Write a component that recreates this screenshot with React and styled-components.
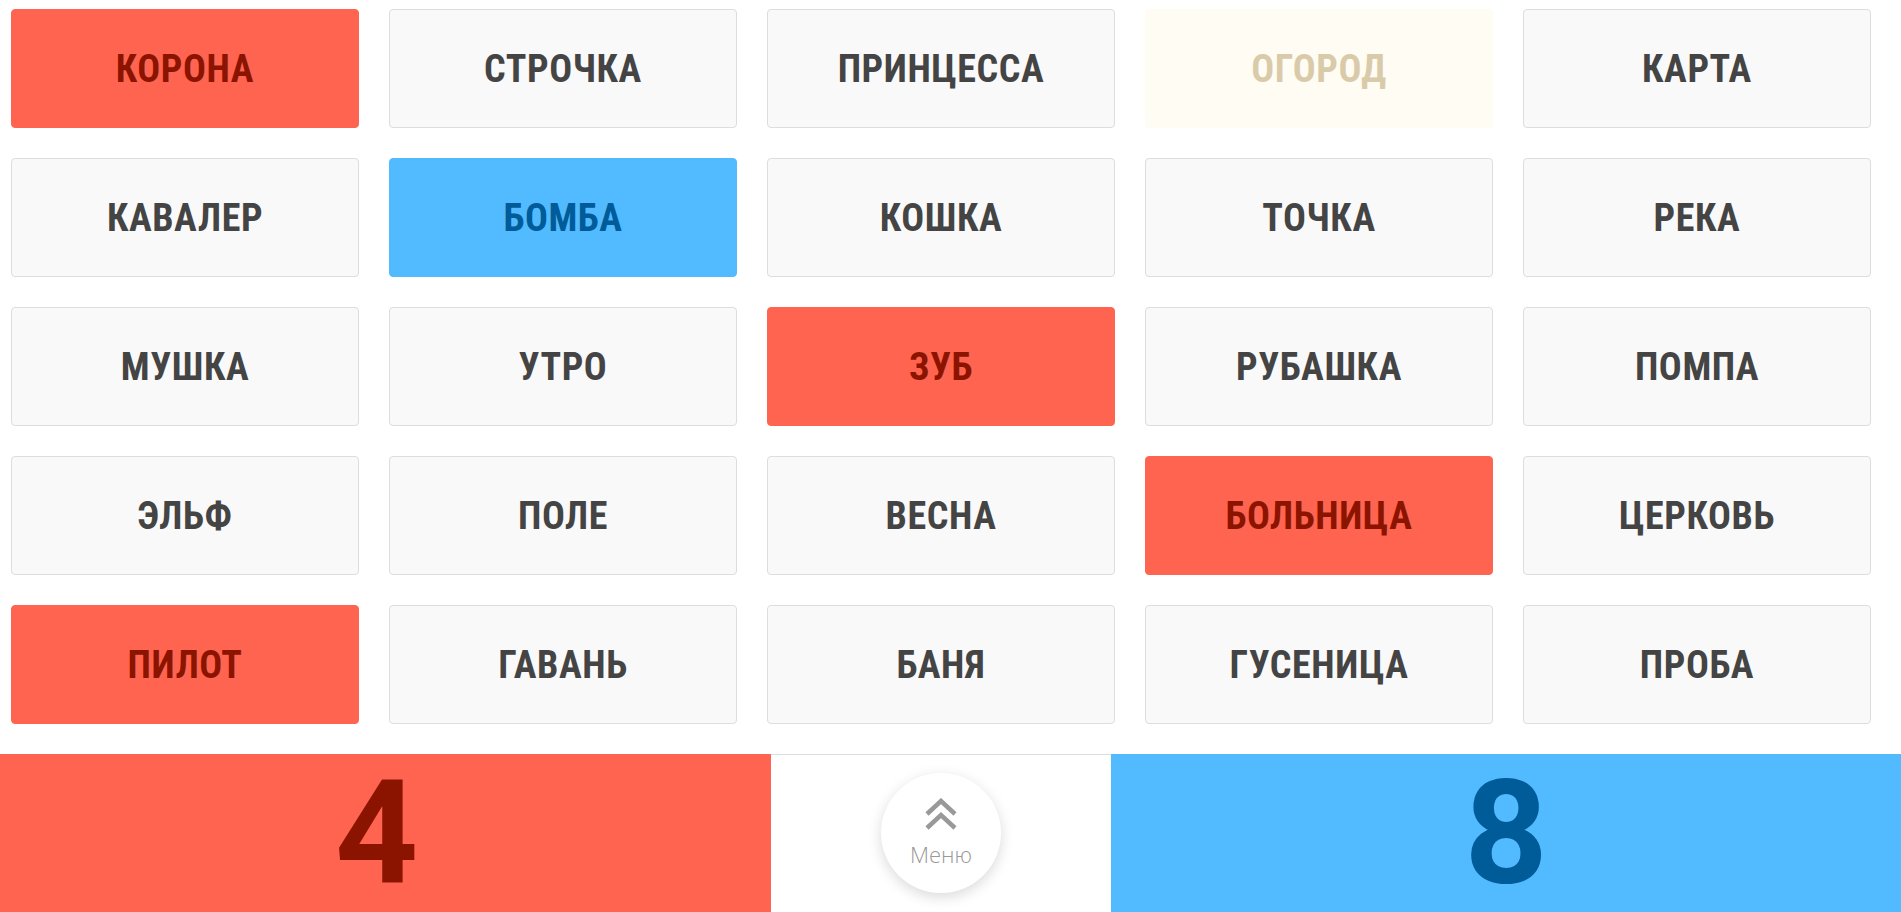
import React from 'react';
import styled, { createGlobalStyle } from 'styled-components';

const GlobalStyle = createGlobalStyle`
  html, body {
    margin: 0;
    padding: 0;
    background: #fff;
    font-family: Roboto, 'Liberation Sans', sans-serif;
  }
`;

const words = [
  ['КОРОНА', 'red'], ['СТРОЧКА', 'neutral'], ['ПРИНЦЕССА', 'neutral'], ['ОГОРОД', 'killer'], ['КАРТА', 'neutral'],
  ['КАВАЛЕР', 'neutral'], ['БОМБА', 'blue'], ['КОШКА', 'neutral'], ['ТОЧКА', 'neutral'], ['РЕКА', 'neutral'],
  ['МУШКА', 'neutral'], ['УТРО', 'neutral'], ['ЗУБ', 'red'], ['РУБАШКА', 'neutral'], ['ПОМПА', 'neutral'],
  ['ЭЛЬФ', 'neutral'], ['ПОЛЕ', 'neutral'], ['ВЕСНА', 'neutral'], ['БОЛЬНИЦА', 'red'], ['ЦЕРКОВЬ', 'neutral'],
  ['ПИЛОТ', 'red'], ['ГАВАНЬ', 'neutral'], ['БАНЯ', 'neutral'], ['ГУСЕНИЦА', 'neutral'], ['ПРОБА', 'neutral'],
];

const palette = {
  red: { bg: '#ff6450', border: '#ff6450', color: '#8b1400' },
  blue: { bg: '#52baff', border: '#52baff', color: '#005b99' },
  killer: { bg: '#fffcf3', border: '#fffcf3', color: '#d9cba9' },
  neutral: { bg: '#f9f9f9', border: '#dddddd', color: '#444444' },
};

const App = () => {
  return (
    <>
      <GlobalStyle />
      <Page>
        <Board>
          {words.map(([word, kind]) => (
            <Card key={word} $kind={kind}>{word}</Card>
          ))}
        </Board>
        <ScoreBar>
          <Score $team='red'><Digit>4</Digit></Score>
          <Middle>
            <MenuButton>
              <svg width='34' height='32' viewBox='0 0 34 32' fill='none' stroke='#999' strokeWidth='4.5'>
                <polyline points='3,16 17,3 31,16' />
                <polyline points='3,30 17,17 31,30' />
              </svg>
              <span>Меню</span>
            </MenuButton>
          </Middle>
          <Score $team='blue'><Digit>8</Digit></Score>
        </ScoreBar>
      </Page>
    </>
  );
};

const Page = styled.div`
  width: 1901px;
  height: 912px;
  display: flex;
  flex-direction: column;
`;

const Board = styled.div`
  display: grid;
  grid-template-columns: repeat(5, 348px);
  grid-auto-rows: 119px;
  column-gap: 30px;
  row-gap: 30px;
  padding: 9px 0 0 11px;
  flex: 0 0 754px;
  box-sizing: border-box;
`;

const Card = styled.div`
  display: flex;
  align-items: center;
  justify-content: center;
  box-sizing: border-box;
  border-radius: 4px;
  background: ${(p) => palette[p.$kind].bg};
  border: 1px solid ${(p) => palette[p.$kind].border};
  color: ${(p) => palette[p.$kind].color};
  font-family: 'Roboto Condensed', Roboto, sans-serif;
  font-stretch: 75%;
  font-weight: 700;
  font-size: 38px;
  letter-spacing: 0.6px;
`;

const ScoreBar = styled.div`
  display: flex;
  flex: 0 0 158px;
`;

const Score = styled.div`
  flex: ${(p) => (p.$team === 'red' ? '0 0 771px' : '1')};
  background: ${(p) => (p.$team === 'red' ? '#ff6450' : '#52baff')};
  color: ${(p) => (p.$team === 'red' ? '#8b1400' : '#005b99')};
  padding-right: ${(p) => (p.$team === 'red' ? '18px' : '0')};
  box-sizing: border-box;
  display: flex;
  align-items: center;
  justify-content: center;
`;

const Digit = styled.span`
  font-family: Roboto, 'Liberation Sans', sans-serif;
  font-weight: 700;
  font-size: 145px;
  line-height: 150px;
  height: 150px;
`;

const Middle = styled.div`
  flex: 0 0 340px;
  border-top: 1px solid #dddddd;
  box-sizing: border-box;
  display: flex;
  justify-content: center;
  padding-top: 18px;
`;

const MenuButton = styled.div`
  width: 120px;
  height: 120px;
  border-radius: 50%;
  background: #fff;
  box-shadow: 0 4px 14px rgba(0, 0, 0, 0.15);
  display: flex;
  flex-direction: column;
  align-items: center;
  padding-top: 25px;
  box-sizing: border-box;
  gap: 13px;

  span {
    font-family: 'Open Sans', sans-serif;
    font-weight: 300;
    font-size: 22px;
    line-height: 1;
    color: #999;
  }
`;

export default App;
